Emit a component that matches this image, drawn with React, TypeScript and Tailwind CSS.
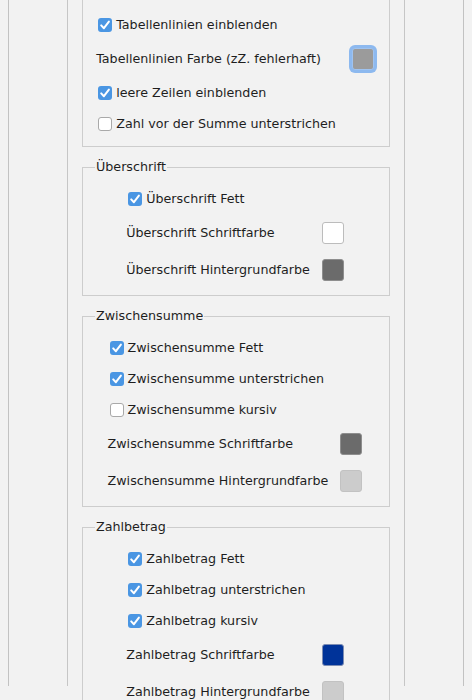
import React from "react";

type Row =
  | { kind: "check"; label: string; checked: boolean }
  | { kind: "color"; label: string; fill: string; border: string; focus?: boolean };

const groups: { title: string; rows: Row[]; first?: boolean }[] = [
  {
    title: "Tabellenlayout",
    first: true,
    rows: [
      { kind: "check", label: "Tabellenlinien einblenden", checked: true },
      { kind: "color", label: "Tabellenlinien Farbe (zZ. fehlerhaft)", fill: "#9b9b9b", border: "#8a8a8a", focus: true },
      { kind: "check", label: "leere Zeilen einblenden", checked: true },
      { kind: "check", label: "Zahl vor der Summe unterstrichen", checked: false },
    ],
  },
  {
    title: "Überschrift",
    rows: [
      { kind: "check", label: "Überschrift Fett", checked: true },
      { kind: "color", label: "Überschrift Schriftfarbe", fill: "#ffffff", border: "#bcbcbc" },
      { kind: "color", label: "Überschrift Hintergrundfarbe", fill: "#6b6b6b", border: "#8e8e8e" },
    ],
  },
  {
    title: "Zwischensumme",
    rows: [
      { kind: "check", label: "Zwischensumme Fett", checked: true },
      { kind: "check", label: "Zwischensumme unterstrichen", checked: true },
      { kind: "check", label: "Zwischensumme kursiv", checked: false },
      { kind: "color", label: "Zwischensumme Schriftfarbe", fill: "#6b6b6b", border: "#8e8e8e" },
      { kind: "color", label: "Zwischensumme Hintergrundfarbe", fill: "#cccccc", border: "#c2c2c2" },
    ],
  },
  {
    title: "Zahlbetrag",
    rows: [
      { kind: "check", label: "Zahlbetrag Fett", checked: true },
      { kind: "check", label: "Zahlbetrag unterstrichen", checked: true },
      { kind: "check", label: "Zahlbetrag kursiv", checked: true },
      { kind: "color", label: "Zahlbetrag Schriftfarbe", fill: "#003399", border: "#7d8db3" },
      { kind: "color", label: "Zahlbetrag Hintergrundfarbe", fill: "#cccccc", border: "#c2c2c2" },
    ],
  },
];

function CheckRow({ label, checked }: { label: string; checked: boolean }) {
  return (
    <div className="col-start-1 flex h-[19px] items-center gap-[4px] pl-[2px] pr-[4px]">
      {checked ? (
        <span className="flex h-[14px] w-[14px] items-center justify-center rounded-[3px] bg-[#4a96e3]">
          <svg width="14" height="14" viewBox="0 0 14 14" aria-hidden>
            <path d="M3.2 7.4 L5.9 10.2 L10.9 3.6" fill="none" stroke="#ffffff" strokeWidth="2" strokeLinecap="round" strokeLinejoin="round" />
          </svg>
        </span>
      ) : (
        <span className="h-[14px] w-[14px] rounded-[3px] border border-[#a9a9a9] bg-white" />
      )}
      <span className="whitespace-nowrap">{label}</span>
    </div>
  );
}

function ColorRow({ label, fill, border, focus }: { label: string; fill: string; border: string; focus?: boolean }) {
  return (
    <>
      <div className="col-start-1 flex h-[25px] items-center whitespace-nowrap">{label}</div>
      <div className="flex h-[25px] items-center">
        <span
          className={
            focus
              ? "h-[22px] w-[22px] rounded-[3px] border shadow-[0_0_0_3px_#8db9ef]"
              : "h-[22px] w-[22px] rounded-[3px] border"
          }
          style={{ background: fill, borderColor: focus ? "#9fc3f0" : border }}
        />
      </div>
    </>
  );
}

export default function App() {
  return (
    <div className="h-[700px] overflow-hidden bg-[#f2f2f2] pl-2 font-['DejaVu_Sans',sans-serif] text-[12.7px] text-[#1e1e1e]">
      <div className="h-full w-[456px] border-x border-[#c2c2c2] px-[58px]">
        <div className="h-full border-x border-[#c6c6c6] px-[14px]">
          {groups.map((g) => (
            <fieldset
              key={g.title}
              className={
                g.first
                  ? "-mt-[14px] border border-[#cdcdcd] pb-[13px] pl-[7px] pr-[9px] pt-[15px]"
                  : "mt-[13px] border border-[#cdcdcd] pb-[13px] pl-[7px] pr-[9px] pt-[15px]"
              }
            >
              <legend className="ml-[5px] px-[1px] leading-[14px]">{g.title}</legend>
              <div className="flex justify-center">
                <div className="grid grid-cols-[auto_22px] gap-x-3 gap-y-3">
                  {g.rows.map((r) =>
                    r.kind === "check" ? (
                      <CheckRow key={r.label} label={r.label} checked={r.checked} />
                    ) : (
                      <ColorRow key={r.label} label={r.label} fill={r.fill} border={r.border} focus={r.focus} />
                    )
                  )}
                </div>
              </div>
            </fieldset>
          ))}
        </div>
      </div>
    </div>
  );
}
